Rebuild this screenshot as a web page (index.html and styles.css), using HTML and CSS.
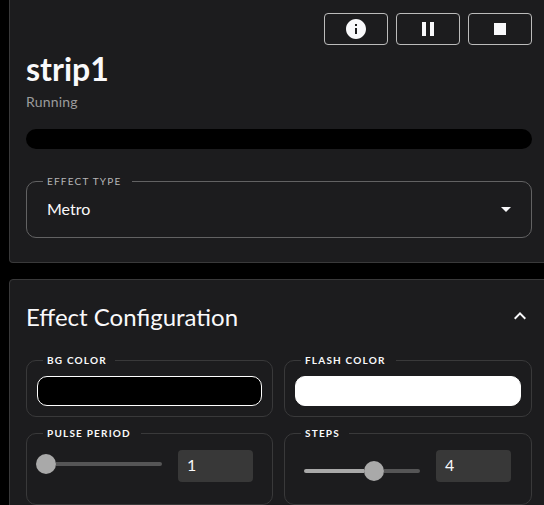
FILE: index.html
```
<!DOCTYPE html>
<html lang="en">
<head>
<meta charset="utf-8">
<title>strip1</title>
<link rel="stylesheet" href="styles.css">
</head>
<body>
<main class="page">
  <section class="card device">
    <div class="actions">
      <button class="btn" aria-label="Info"><svg viewBox="0 0 24 24"><path d="M12 2C6.48 2 2 6.48 2 12s4.480 10 10 10 10-4.480 10-10S17.520 2 12 2zm1 15h-2v-6h2v6zm0-8h-2V7h2v2z"/></svg></button>
      <button class="btn" aria-label="Pause"><svg viewBox="0 0 24 24"><path d="M6 19h4V5H6v14zm8-14v14h4V5h-4z"/></svg></button>
      <button class="btn" aria-label="Stop"><svg viewBox="0 0 24 24"><path d="M6 6h12v12H6z"/></svg></button>
    </div>
    <h1 class="title"><span>strip1</span></h1>
    <p class="status"><span>Running</span></p>
    <div class="preview"></div>
    <div class="select">
      <span class="label label-type">Effect Type</span>
      <span class="value">Metro</span>
      <svg class="arrow" viewBox="0 0 24 24"><path d="M7 10l5 5 5-5z"/></svg>
    </div>
  </section>
  <section class="card config">
    <header class="config-head">
      <h2 class="heading"><span>Effect Configuration</span></h2>
      <svg class="chevron" viewBox="0 0 24 24"><path d="M12 8l-6 6 1.410 1.410L12 10.830l4.590 4.580L18 14z"/></svg>
    </header>
    <div class="grid">
      <div class="field"><span class="label label-bg">BG Color</span><div class="swatch black"></div></div>
      <div class="field"><span class="label label-flash">Flash Color</span><div class="swatch white"></div></div>
      <div class="field slider-field">
        <span class="label label-pulse">Pulse Period</span>
        <div class="slider"><div class="thumb"></div><div class="rest"></div></div>
        <div class="number">1</div>
      </div>
      <div class="field slider-field">
        <span class="label label-steps">Steps</span>
        <div class="slider steps"><div class="fill"></div><div class="thumb"></div><div class="rest"></div></div>
        <div class="number">4</div>
      </div>
    </div>
  </section>
</main>
</body>
</html>
```
FILE: styles.css
```
* { box-sizing: border-box; }
body {
  margin: 0;
  height: 505px;
  overflow: hidden;
  background: #000;
  color: #f9f9fb;
  font-family: Lato, "Open Sans", sans-serif;
}
svg { display: block; width: 24px; height: 24px; fill: #f9f9fb; }
.page { width: 549px; padding-left: 9px; }
.card {
  background: #1c1c1e;
  border: 1px solid #39393a;
  border-radius: 4px;
  padding: 0 16px;
}
.device { height: 263px; border-top: 0; border-radius: 0 0 4px 4px; padding-top: 13px; }
.actions { display: flex; justify-content: flex-end; gap: 8px; }
.btn {
  display: flex;
  align-items: center;
  justify-content: center;
  width: 64px;
  height: 32px;
  padding: 0;
  background: transparent;
  border: 1px solid #bbb;
  border-radius: 4px;
}
.title { margin: 0; height: 47px; font-size: 32px; line-height: 47px; font-weight: 700; }
.status { margin: 0; height: 20px; font-size: 14px; line-height: 20px; color: #9b9b9c; letter-spacing: .2px; }
.preview { height: 20px; margin-top: 17px; border-radius: 10px; background: #000; }
.select {
  position: relative;
  display: flex;
  align-items: center;
  justify-content: space-between;
  height: 57px;
  margin-top: 32px;
  padding: 0 13px 2px 20px;
  border: 1.500px solid #626263;
  border-radius: 10px;
}
.value { font-size: 16px; }
.label {
  position: absolute;
  top: -8px;
  left: 16px;
  height: 14px;
  padding: 0 0 0 4px;
  background: #1c1c1e;
  font-size: 10px;
  line-height: 14px;
  font-weight: 700;
  letter-spacing: 1.200px;
  text-transform: uppercase;
  white-space: nowrap;
}
.label-type { width: 89px; color: #b5b5b6; font-weight: 400; }
.label-bg { width: 72px; }
.label-flash { width: 95px; }
.label-pulse { width: 98px; }
.label-steps { width: 48px; }
.config { height: 300px; margin-top: 16px; }
.config-head { display: flex; justify-content: space-between; align-items: center; height: 72px; }
.heading { margin: 0; font-size: 24px; font-weight: 400; }
.chevron { }
.grid { display: grid; grid-template-columns: 247px 248px; column-gap: 11px; row-gap: 16px; margin-top: 8px; }
.field {
  position: relative;
  height: 57px;
  padding: 15px 10px;
  border: 1px solid #39393a;
  border-radius: 10px;
}
.swatch { height: 30px; border: 1px solid #fff; border-radius: 10px; }
.black { background: #000; }
.white { background: #fff; }
.slider-field { display: flex; height: 72px; padding: 16px 19px 0; justify-content: space-between; }
.slider { display: flex; align-items: center; width: 126px; height: 20px; margin: 4px 0 0 -10px; }
.steps { width: 116px; margin: 11px 0 0; }
.slider-field + .slider-field { padding-right: 20px; }
.thumb { flex: none; width: 20px; height: 20px; border-radius: 50%; background: #a9a9a9; }
.fill { width: 60px; height: 4px; border-radius: 2px 0 0 2px; background: #a9a9a9; }
.rest { flex: 1; height: 4px; border-radius: 0 2px 2px 0; background: #555556; }
.number { width: 75px; height: 32px; padding-left: 9px; border-radius: 4px; background: #383838; font-size: 16px; line-height: 30px; }
```
